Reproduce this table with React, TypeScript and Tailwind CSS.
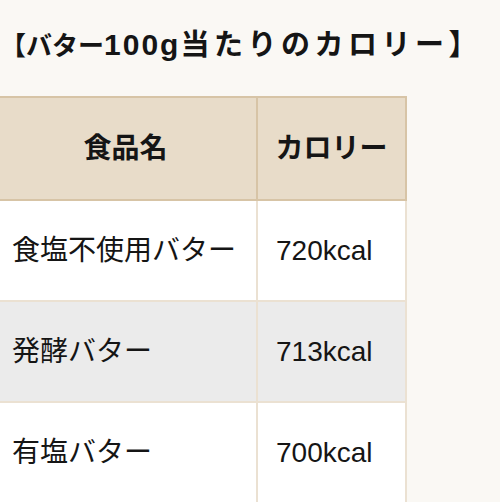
import React from "react";

type Row = {
  name: string;
  kcal: string;
};

const rows: Row[] = [
  { name: "食塩不使用バター", kcal: "720kcal" },
  { name: "発酵バター", kcal: "713kcal" },
  { name: "有塩バター", kcal: "700kcal" },
];

export default function App() {
  return (
    <div className="min-h-[502px] overflow-hidden bg-[#faf8f4] text-[#151515] font-['Liberation_Sans','Noto_Sans_CJK_JP',sans-serif]">
      {/* Title */}
      <h3 className="whitespace-nowrap pt-[26px] text-[29px] font-bold leading-[38px]">
        <span className="text-[26px]">【バター</span>
        <span className="text-[30px] tracking-[2px]">100g</span>
        <span className="tracking-[4.5px]">当たりのカロリー】</span>
      </h3>

      {/* Calorie table */}
      <table className="-ml-[7px] mt-[31px] border-collapse text-[28px]">
        <thead>
          <tr className="bg-[#e8dcc9]">
            <th className="h-[103px] w-[263px] border-2 border-[#d7c4a6] px-[17px] text-center font-bold">
              食品名
            </th>
            <th className="h-[103px] w-[149px] border-2 border-[#d7c4a6] px-[16px] text-center font-bold">
              カロリー
            </th>
          </tr>
        </thead>
        <tbody>
          {rows.map((row, i) => (
            <tr key={row.name} className={i % 2 === 1 ? "bg-[#ebebeb]" : "bg-white"}>
              <td className="h-[101px] whitespace-nowrap border-2 border-[#ebe1d2] px-[17px] text-left">
                {row.name}
              </td>
              <td className="h-[101px] whitespace-nowrap border-2 border-[#ebe1d2] px-[18px] text-left">
                {row.kcal}
              </td>
            </tr>
          ))}
        </tbody>
      </table>
    </div>
  );
}
